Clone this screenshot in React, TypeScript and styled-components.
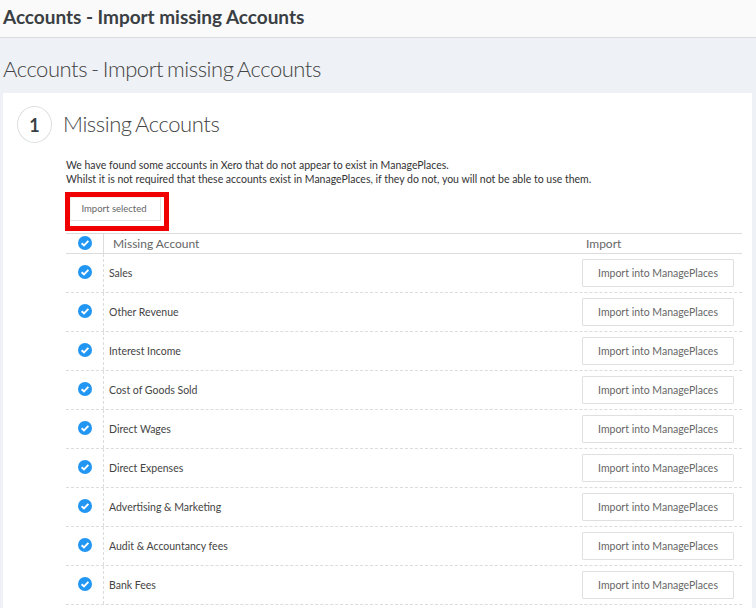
import React from "react";
import styled, { createGlobalStyle } from "styled-components";

const Global = createGlobalStyle`
  html, body { margin: 0; padding: 0; background: #eef1f5; }
  body { font-family: Lato, "Liberation Sans", sans-serif; color: #333; overflow: hidden; }
  #root { height: 608px; overflow: hidden; }
`;

const Page = styled.div`
  width: 756px;
  height: 608px;
  overflow: hidden;
  background: #eef1f5;
`;
const TopBar = styled.header`
  height: 32px;
  background: #fafafa;
  border-bottom: 1px solid #d9dcdf;
  padding: 0 0 5px 3px;
  display: flex;
  align-items: center;
  font-size: 19px;
  font-weight: 700;
  letter-spacing: -0.03px;
  color: #3a3f44;
`;
const PageTitle = styled.h1`
  margin: 0;
  height: 55px;
  box-sizing: border-box;
  padding: 5px 0 0 3px;
  display: flex;
  align-items: center;
  font-size: 22px;
  font-weight: 300;
  letter-spacing: -0.45px;
  word-spacing: -1.5px;
  color: #444;
`;
const Card = styled.main`
  margin: 0 4px 0 3px;
  background: #fff;
  height: 515px;
  padding: 13px 10px 0 14px;
  box-sizing: border-box;
`;
const StepHead = styled.div`
  display: flex;
  align-items: center;
  gap: 11px;
  height: 37px;
`;
const StepBadge = styled.div`
  width: 35px;
  height: 37px;
  border-radius: 50%;
  border: 1px solid #dcdfe2;
  box-sizing: border-box;
  display: flex;
  align-items: center;
  justify-content: center;
  font-size: 18px;
  font-weight: 700;
  color: #3a3f44;
`;
const StepTitle = styled.h2`
  margin: 0 0 2px;
  font-size: 22px;
  font-weight: 300;
  letter-spacing: -0.42px;
  word-spacing: -1.5px;
  color: #444;
`;
const Body = styled.div`
  margin-left: 49px;
  padding-top: 15px;
`;
const Intro = styled.p`
  margin: 0;
  font-size: 10.5px;
  line-height: 14px;
  color: #333;
`;
const ActionRow = styled.div`
  position: relative;
  height: 47px;
  padding: 11px 0 0 4px;
  box-sizing: border-box;
`;
const SelectButton = styled.button`
  width: 91px;
  height: 24px;
  background: #fff;
  border: 1px solid #e2e2e2;
  border-left-color: #f2f2f2;
  border-top-color: #f2f2f2;
  font: 400 9.5px Lato, sans-serif;
  color: #666;
  padding: 0 3px 2px 0;
  display: block;
`;
const RedHighlight = styled.div`
  position: absolute;
  left: -1px;
  top: 6px;
  width: 104px;
  height: 39px;
  border: 5px solid #f00000;
  box-sizing: border-box;
  pointer-events: none;
`;
const Table = styled.div`
  width: 676px;
`;
const HeadRow = styled.div`
  display: grid;
  grid-template-columns: 37px 1fr 156px;
  height: 21px;
  box-sizing: border-box;
  border-top: 1px solid #dcdcdc;
  border-bottom: 1px solid #dcdcdc;
  align-items: center;
  font-size: 12px;
  color: #666;
`;
const Row = styled.div`
  display: grid;
  grid-template-columns: 37px 1fr 156px;
  height: 39px;
  box-sizing: border-box;
  border-bottom: 1px dashed #dcdcdc;
  align-items: center;
`;
const CheckCell = styled.div<{ $lift: number }>`
  height: 100%;
  display: flex;
  align-items: center;
  justify-content: center;
  padding-bottom: ${(p) => p.$lift}px;
  box-sizing: border-box;
`;
const HeadName = styled.div`
  height: 100%;
  display: flex;
  align-items: center;
  padding-left: 9px;
  border-left: 1px solid #dcdcdc;
`;
const HeadImport = styled.div``;
const NameCell = styled.div`
  height: 100%;
  display: flex;
  align-items: center;
  padding-left: 5px;
  border-left: 1px dashed #dcdcdc;
  font-size: 10.5px;
  color: #444;
`;
const ImportCell = styled.div`
  display: flex;
  margin-left: -4px;
`;
const ImportButton = styled.button`
  width: 152px;
  height: 28px;
  background: #fff;
  border: 1px solid #e0e0e0;
  border-radius: 1px;
  font: 400 10.5px Lato, sans-serif;
  color: #666;
  padding: 0;
`;

const Check = () => (
  <svg width="14" height="14" viewBox="0 0 14 14" aria-hidden="true">
    <circle cx="7" cy="7" r="7" fill="#2196f3" />
    <path d="M3.6 7.2 6 9.5l4.4-4.6" fill="none" stroke="#fff" strokeWidth="1.9" />
  </svg>
);

const accounts = [
  "Sales",
  "Other Revenue",
  "Interest Income",
  "Cost of Goods Sold",
  "Direct Wages",
  "Direct Expenses",
  "Advertising & Marketing",
  "Audit & Accountancy fees",
  "Bank Fees",
];

export default function App() {
  return (
    <Page>
      <Global />
      <TopBar>Accounts - Import missing Accounts</TopBar>
      <PageTitle>Accounts - Import missing Accounts</PageTitle>
      <Card>
        <StepHead>
          <StepBadge>1</StepBadge>
          <StepTitle>Missing Accounts</StepTitle>
        </StepHead>
        <Body>
          <Intro>
            We have found some accounts in Xero that do not appear to exist in ManagePlaces.
            <br />
            Whilst it is not required that these accounts exist in ManagePlaces, if they do not, you will not be able to use them.
          </Intro>
          <ActionRow>
            <SelectButton>Import selected</SelectButton>
            <RedHighlight />
          </ActionRow>
          <Table>
            <HeadRow>
              <CheckCell $lift={2}><Check /></CheckCell>
              <HeadName>Missing Account</HeadName>
              <HeadImport>Import</HeadImport>
            </HeadRow>
            {accounts.map((a) => (
              <Row key={a}>
                <CheckCell $lift={3}><Check /></CheckCell>
                <NameCell>{a}</NameCell>
                <ImportCell><ImportButton>Import into ManagePlaces</ImportButton></ImportCell>
              </Row>
            ))}
          </Table>
        </Body>
      </Card>
    </Page>
  );
}
